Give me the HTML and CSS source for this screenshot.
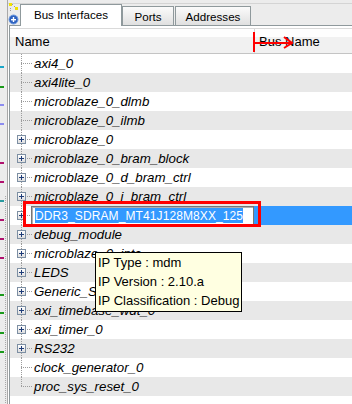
FILE: index.html
```html
<!DOCTYPE html>
<html>
<head>
<meta charset="utf-8">
<link rel="stylesheet" href="styles.css">
</head>
<body>
<div class="app">
  <div class="side">
    <div class="marks">
      <div class="mark m-cyan" style="margin-top:66px"></div>
      <div class="mark m-green" style="margin-top:18px"></div>
      <div class="mark m-purple" style="margin-top:16px"></div>
      <div class="mark m-purple" style="margin-top:17px"></div>
      <div class="mark m-mag" style="margin-top:37px"></div>
      <div class="mark m-mag" style="margin-top:17px"></div>
      <div class="mark m-teal" style="margin-top:17px"></div>
      <div class="mark m-mag" style="margin-top:17px"></div>
      <div class="mark m-mag" style="margin-top:17px"></div>
      <div class="mark m-mag" style="margin-top:17px"></div>
      <div class="mark m-green" style="margin-top:35px"></div>
      <div class="mark m-green" style="margin-top:16px"></div>
      <div class="mark m-green" style="margin-top:18px"></div>
      <div class="mark m-green" style="margin-top:17px"></div>
    </div>
    <div class="grip"><div class="grip-dots"></div></div>
  </div>
  <div class="main">
    <div class="tabstrip">
      <div class="tool">
        <svg width="12" height="25" viewBox="0 0 12 25">
          <rect x="1" y="3" width="3" height="3" fill="#f2e200"/>
          <rect x="7" y="7" width="3" height="3" fill="#f2e200"/>
          <rect x="4" y="4" width="1" height="1" fill="#9a9a9a"/>
          <rect x="6" y="6" width="1" height="1" fill="#9a9a9a"/>
          <rect x="2" y="8" width="1" height="1" fill="#9a9a9a"/>
          <rect x="2" y="10" width="1" height="1" fill="#9a9a9a"/>
          <circle cx="5.5" cy="19.5" r="4.5" fill="#2f62c0" stroke="#6f9be0" stroke-width="1"/>
          <rect x="3" y="19" width="5" height="1.4" fill="#fff"/>
          <rect x="4.8" y="17" width="1.4" height="5" fill="#fff"/>
        </svg>
      </div>
      <div class="tab active">Bus Interfaces</div>
      <div class="tab inactive ports">Ports</div>
      <div class="tab inactive addr">Addresses</div>
    </div>
    <div class="panel">
      <div class="header">
        <div class="col-name">Name</div>
        <div class="col-bus">Bus Name</div>
      </div>
      <div class="rows">
        <div class="row"><span class="tree"></span><span class="label">axi4_0</span></div>
        <div class="row"><span class="tree"></span><span class="label">axi4lite_0</span></div>
        <div class="row"><span class="tree"></span><span class="label">microblaze_0_dlmb</span></div>
        <div class="row"><span class="tree"></span><span class="label">microblaze_0_ilmb</span></div>
        <div class="row"><span class="tree"><span class="exp"></span></span><span class="label">microblaze_0</span></div>
        <div class="row"><span class="tree"><span class="exp"></span></span><span class="label">microblaze_0_bram_block</span></div>
        <div class="row"><span class="tree"><span class="exp"></span></span><span class="label">microblaze_0_d_bram_ctrl</span></div>
        <div class="row"><span class="tree"><span class="exp"></span></span><span class="label">microblaze_0_i_bram_ctrl</span></div>
        <div class="row sel"><span class="tree"><span class="exp"></span></span><span class="editor"><span class="sel-text">DDR3_SDRAM_MT41J128M8XX_125</span></span></div>
        <div class="row"><span class="tree"><span class="exp"></span></span><span class="label">debug_module</span></div>
        <div class="row"><span class="tree"><span class="exp"></span></span><span class="label">microblaze_0_intc</span></div>
        <div class="row"><span class="tree"><span class="exp"></span></span><span class="label">LEDS</span></div>
        <div class="row"><span class="tree"><span class="exp"></span></span><span class="label">Generic_SRAM</span></div>
        <div class="row"><span class="tree"><span class="exp"></span></span><span class="label">axi_timebase_wdt_0</span></div>
        <div class="row"><span class="tree"><span class="exp"></span></span><span class="label">axi_timer_0</span></div>
        <div class="row"><span class="tree"><span class="exp"></span></span><span class="label">RS232</span></div>
        <div class="row"><span class="tree"></span><span class="label">clock_generator_0</span></div>
        <div class="row last"><span class="tree"></span><span class="label">proc_sys_reset_0</span></div>
      </div>
    </div>
  </div>
</div>

<svg class="arrow" width="42" height="23" viewBox="0 0 42 23">
  <line x1="2" y1="1" x2="2" y2="21" stroke="#f00" stroke-width="2"/>
  <line x1="2" y1="12" x2="40" y2="12" stroke="#f00" stroke-width="2"/>
  <polyline points="32,6 40,12 32,17" fill="none" stroke="#f00" stroke-width="2"/>
</svg>
<div class="redbox"></div>
<div class="tooltip">
  <div>IP Type : mdm</div>
  <div>IP Version : 2.10.a</div>
  <div>IP Classification : Debug</div>
</div>
</body>
</html>
```
FILE: styles.css
```css
* { box-sizing: border-box; }
html, body { margin: 0; padding: 0; }
body {
  width: 352px;
  height: 404px;
  overflow: hidden;
  background: #fff;
  font-family: "Liberation Sans", Arial, sans-serif;
  color: #000;
  position: relative;
}
.app { display: flex; height: 404px; }

/* left strip */
.side {
  width: 8px;
  flex: none;
  display: flex;
  background: #ececec;
  border-right: 1px solid #a8a8a8;
}
.marks { width: 4px; display: flex; flex-direction: column; }
.mark { width: 4px; height: 2px; flex: none; }
.m-cyan { background: #1aa6c8; }
.m-green { background: #1a9a1a; }
.m-purple { background: #8c8cf0; }
.m-mag { background: #b0106e; }
.m-teal { background: #2a9aa0; }
.grip { width: 3px; padding-top: 196px; }
.grip-dots {
  height: 100%;
  background: conic-gradient(#a8a8a8 25%, transparent 0) 0 0 / 2px 2px;
}

/* main */
.main { flex: 1; min-width: 0; display: flex; flex-direction: column; }
.tabstrip {
  height: 25px;
  flex: none;
  display: flex;
  align-items: flex-end;
  background: linear-gradient(#ececec 0 3px, #d4d4d4 3px 4px, #ececec 4px);
}
.tool { width: 12px; align-self: stretch; flex: none; }
.tool svg { display: block; }
.tab {
  font-size: 11.6px;
  display: flex;
  align-items: center;
  justify-content: center;
  border: 1px solid #8f999c;
  border-bottom: none;
  flex: none;
}
.tab.active {
  width: 102px;
  height: 22px;
  margin-bottom: -1px;
  background: #fff;
  position: relative;
  z-index: 1;
  padding-bottom: 2px;
}
.tab.inactive {
  height: 19px;
  background: linear-gradient(#fbfbfb, #e0e0e0);
}
.tab.ports { width: 52px; }
.tab.addr { width: 76px; margin-left: 1px; }

.panel {
  flex: 1;
  margin-left: 1px;
  border-top: 1px solid #8f999c;
  border-left: 1px solid #8f999c;
  padding-top: 2px;
  background: #fff;
}
.header {
  height: 26px;
  display: flex;
  font-size: 13px;
  border-top: 1px solid #dadada;
  border-bottom: 1px solid #c4c4c4;
  background: linear-gradient(#fefefe 0 8px, #f1f1f1 8px);
}
.col-name { width: 244px; padding-left: 5px; display: flex; align-items: center; }
.col-bus { flex: 1; border-left: 1px solid #d6d6d6; padding-left: 4px; display: flex; align-items: center; }

.rows { display: flex; flex-direction: column; }
.row {
  height: 19px;
  display: flex;
  align-items: center;
  font-size: 13.3px;
  font-style: italic;
  white-space: nowrap;
}
.row:nth-child(even) { background: #e8e8e8; }
.tree {
  width: 24px;
  height: 19px;
  flex: none;
  display: flex;
  align-items: center;
  padding-left: 7px;
  background-image:
    repeating-linear-gradient(to bottom, #9c9c9c 0 1px, transparent 1px 2px),
    repeating-linear-gradient(to right, #9c9c9c 0 1px, transparent 1px 2px);
  background-repeat: no-repeat;
  background-position: 11px 0, 11px 9px;
  background-size: 1px 19px, 12px 1px;
}
.row.last .tree { background-size: 1px 10px, 12px 1px; }
.exp {
  width: 9px;
  height: 9px;
  border: 1px solid #7d8fa3;
  background:
    linear-gradient(#1e3c78, #1e3c78) center / 5px 1px no-repeat,
    linear-gradient(#1e3c78, #1e3c78) center / 1px 5px no-repeat,
    linear-gradient(#ffffff, #dedede);
}
.label { padding-left: 0; }

.row.sel { background: #3399ff; }
.row.sel .tree { width: 21px; background-color: #fff; }
.editor {
  width: 223px;
  height: 19px;
  flex: none;
  display: flex;
  border: 1px solid #767676;
  box-shadow: inset 1px 1px 0 #b0b0b0;
  background: #fff;
  padding: 1px 1px 1px 3px;
  font-style: normal;
  font-size: 12px;
}
.sel-text {
  background: #3399ff;
  color: #fff;
  display: flex;
  align-items: center;
  letter-spacing: 0.1px;
}

/* overlays */
.arrow { position: absolute; left: 252px; top: 31px; }
.redbox {
  position: absolute;
  left: 23px;
  top: 201px;
  width: 238px;
  height: 26px;
  border: 3px solid #f00;
}
.tooltip {
  position: absolute;
  left: 95px;
  top: 252px;
  width: 147px;
  height: 60px;
  border: 1px solid #000;
  background: #ffffe1;
  font-size: 13px;
  line-height: 19px;
  padding-left: 2px;
  white-space: nowrap;
}
```
